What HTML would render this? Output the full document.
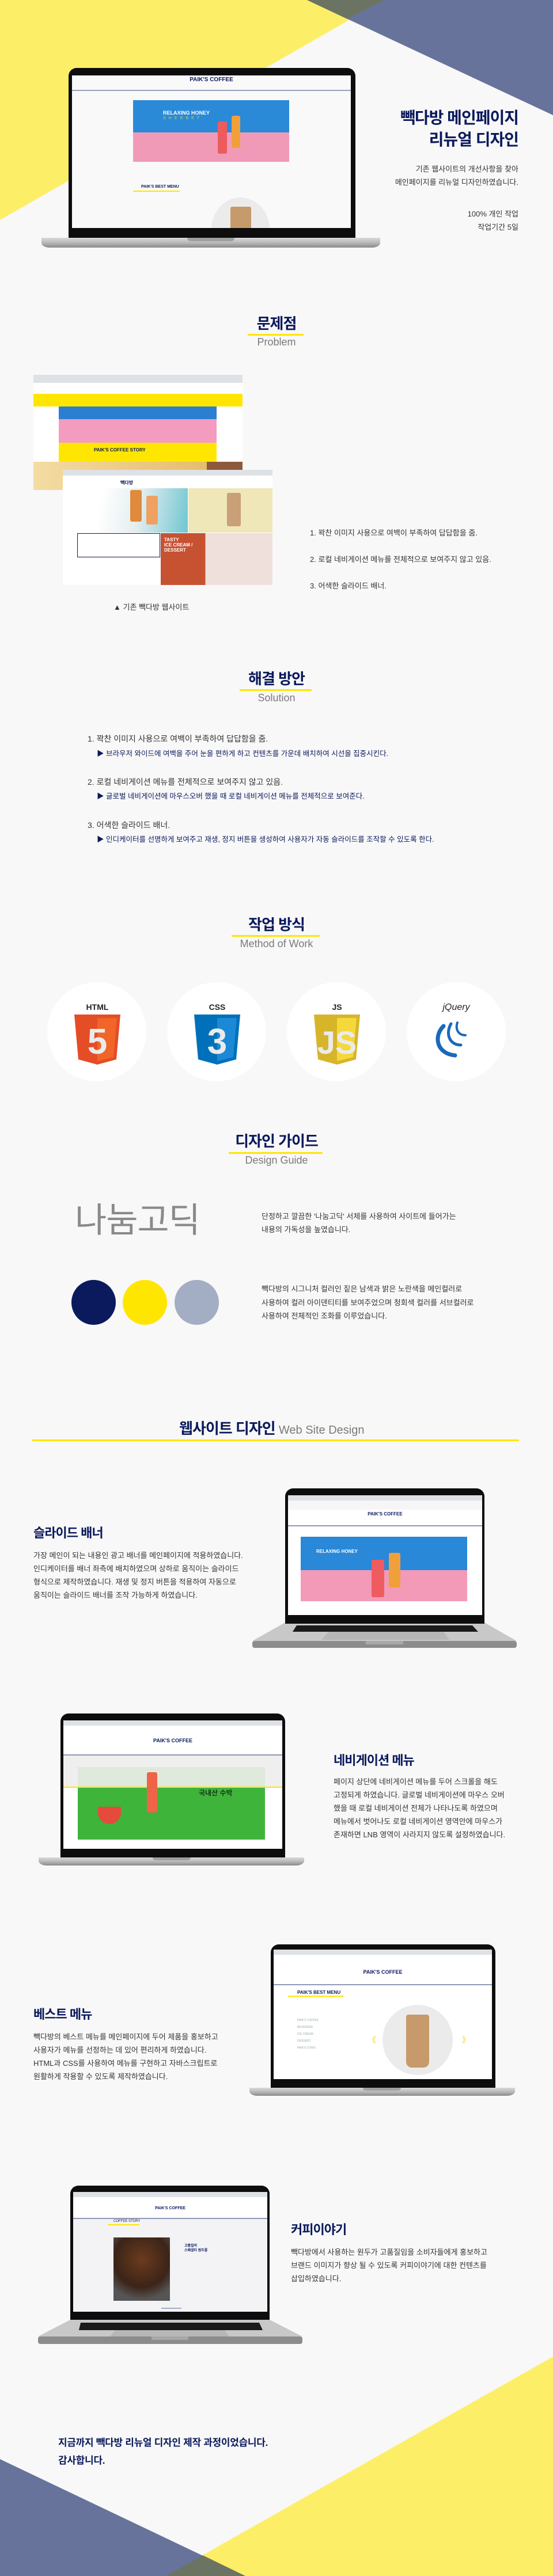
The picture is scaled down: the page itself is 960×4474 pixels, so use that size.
<!DOCTYPE html>
<html><head><meta charset="utf-8">
<style>
*{margin:0;padding:0;box-sizing:border-box}
body{width:960px;height:4474px;background:#f8f8f8;font-family:"Liberation Sans","Noto Sans CJK KR",sans-serif;overflow:hidden}
#w{position:relative;width:960px;height:4474px;overflow:hidden}
.a{position:absolute}
.t{position:absolute;white-space:nowrap;color:#333}
.nv{color:#0b1a5c;font-weight:bold}
.h{position:absolute;left:0;width:960px;text-align:center;color:#0b1a5c;font-weight:bold;font-size:26px;letter-spacing:-1px;line-height:30px}
.sub{position:absolute;left:0;width:960px;text-align:center;color:#7a7a7a;font-size:18px;line-height:22px}
.yl{position:absolute;background:#ffe600;height:3px}
.bz{position:absolute;background:#0d0d0d;border-radius:14px 14px 0 0}
.sc{position:absolute;background:#fff;overflow:hidden}
.base{position:absolute;background:linear-gradient(#d9d9d9,#b9b9b9 50%,#8a8a8a);border-radius:0 0 14px 14px/0 0 8px 8px}
.notch{position:absolute;background:#a0a0a0;border-radius:0 0 6px 6px}
.chr{position:absolute;left:0;right:0;top:0;background:#dee1e6}
.logo{position:absolute;text-align:center;color:#0b1a5c;font-weight:bold;white-space:nowrap}
.p13{font-size:13px;line-height:23px}
</style></head><body><div id="w">

<svg class="a" style="left:0;top:0" width="960" height="4474">
<polygon points="0,0 667,0 0,382" fill="#fdee68"/>
<polygon points="533,0 960,0 960,200" fill="#67739b"/>
<polygon points="533,0 667,0 603,33" fill="#6b7462"/>
<polygon points="960,4093 960,4474 288,4474" fill="#fdee68"/>
<polygon points="0,4271 426,4474 0,4474" fill="#67739b"/>
<polygon points="288,4474 426,4474 352,4438" fill="#6b7462"/>
</svg>

<!-- HERO LAPTOP -->
<div class="bz" style="left:119px;top:118px;width:498px;height:295px"></div>
<div class="sc" style="left:125px;top:131px;width:484px;height:265px;background:#f9f9fa">
  <div class="logo" style="left:0;width:484px;top:2px;font-size:10px">PAIK'S COFFEE</div>
  <div class="a" style="left:0;width:484px;top:25px;height:2px;background:#9aa2bd"></div>
  <div class="a" style="left:106px;top:43px;width:271px;height:107px;background:#2a8ad8"></div>
  <div class="a" style="left:106px;top:99px;width:271px;height:51px;background:#f19ab8"></div>
  <div class="t" style="left:158px;top:60px;color:#fff;font-weight:bold;font-size:9px">RELAXING HONEY</div>
  <div class="t" style="left:158px;top:71px;color:#b9d66a;font-size:7px;letter-spacing:5px">SHERBET</div>
  <div class="a" style="left:253px;top:80px;width:16px;height:56px;background:#ee5b5d;border-radius:3px"></div>
  <div class="a" style="left:277px;top:70px;width:15px;height:56px;background:#f0a03a;border-radius:3px"></div>
  <div class="t nv" style="left:120px;top:190px;font-size:7px">PAIK'S BEST MENU</div>
  <div class="a" style="left:106px;top:200px;width:81px;height:2px;background:#ffe600"></div>
  <div class="a" style="left:242px;top:212px;width:101px;height:110px;background:#ebebeb;border-radius:50%"></div>
  <div class="a" style="left:275px;top:228px;width:36px;height:40px;background:#c79a6b;border-radius:3px"></div>
</div>
<div class="base" style="left:72px;top:413px;width:588px;height:17px"></div>
<div class="notch" style="left:325px;top:413px;width:82px;height:6px"></div>

<div class="t nv" style="right:60px;top:186px;font-size:28px;letter-spacing:-1px;line-height:38px;text-align:right">빽다방 메인페이지<br>리뉴얼 디자인</div>
<div class="t" style="right:60px;top:282px;font-size:13px;line-height:23px;text-align:right">기존 웹사이트의 개선사항을 찾아<br>메인페이지를 리뉴얼 디자인하였습니다.</div>
<div class="t" style="right:60px;top:360px;font-size:13px;line-height:23px;text-align:right">100% 개인 작업<br>작업기간 5일</div>

<!-- PROBLEM -->
<div class="h" style="top:547px">문제점</div>
<div class="yl" style="left:430px;top:580px;width:97px"></div>
<div class="sub" style="top:583px">Problem</div>

<div class="a" style="left:58px;top:651px;width:363px;height:200px;background:#fff;overflow:hidden">
  <div class="chr" style="height:14px"></div>
  <div class="a" style="left:0;top:33px;width:363px;height:22px;background:#ffe600"></div>
  <div class="a" style="left:44px;top:55px;width:274px;height:22px;background:#2a7fd0"></div>
  <div class="a" style="left:44px;top:77px;width:274px;height:41px;background:#f39cc0"></div>
  <div class="a" style="left:44px;top:118px;width:274px;height:33px;background:#ffe600"></div>
  <div class="t nv" style="left:105px;top:126px;font-size:8px">PAIK'S COFFEE STORY</div>
  <div class="a" style="left:0;top:151px;width:301px;height:49px;background:linear-gradient(90deg,#f4dca3,#e6bd6c)"></div>
  <div class="a" style="left:301px;top:151px;width:62px;height:49px;background:#8b5a3c"></div>
</div>
<div class="a" style="left:109px;top:816px;width:364px;height:200px;background:#fff;overflow:hidden">
  <div class="chr" style="height:10px"></div>
  <div class="t nv" style="left:100px;top:17px;font-size:8px">빽다방</div>
  <div class="a" style="left:0;top:32px;width:217px;height:77px;background:linear-gradient(100deg,#fff 30%,#e4eef0 60%,#70c6d1)"></div>
  <div class="a" style="left:117px;top:35px;width:20px;height:55px;background:#e08a3b;border-radius:3px"></div>
  <div class="a" style="left:145px;top:45px;width:20px;height:50px;background:#f0a060;border-radius:3px"></div>
  <div class="a" style="left:218px;top:32px;width:146px;height:77px;background:#efe7b8"></div>
  <div class="a" style="left:285px;top:40px;width:24px;height:58px;background:#c9a078;border-radius:3px"></div>
  <div class="a" style="left:25px;top:110px;width:144px;height:42px;border:1px solid #0b1a5c"></div>
  <div class="a" style="left:170px;top:110px;width:194px;height:90px;background:linear-gradient(90deg,#c65232 40%,#efe0dc 40%)"></div>
  <div class="t" style="left:176px;top:117px;color:#fff;font-weight:bold;font-size:8px;line-height:9px">TASTY<br>ICE CREAM /<br>DESSERT</div>
</div>
<div class="t" style="left:197px;top:1044px;font-size:13px">▲ 기존 빽다방 웹사이트</div>
<div class="t" style="left:538px;top:903px;font-size:13px;line-height:46px">1. 꽉찬 이미지 사용으로 여백이 부족하여 답답함을 줌.<br>2. 로컬 네비게이션 메뉴를 전체적으로 보여주지 않고 있음.<br>3. 어색한 슬라이드 배너.</div>

<!-- SOLUTION -->
<div class="h" style="top:1164px">해결 방안</div>
<div class="yl" style="left:416px;top:1197px;width:125px"></div>
<div class="sub" style="top:1201px">Solution</div>
<div class="t" style="left:152px;top:1274px;font-size:14px;line-height:18px">1. 꽉찬 이미지 사용으로 여백이 부족하여 답답함을 줌.</div>
<div class="t nv" style="left:168px;top:1301px;font-size:12.5px;font-weight:normal;line-height:16px">▶ 브라우저 와이드에 여백을 주어 눈을 편하게 하고 컨텐츠를 가운데 배치하여 시선을 집중시킨다.</div>
<div class="t" style="left:152px;top:1349px;font-size:14px;line-height:18px">2. 로컬 네비게이션 메뉴를 전체적으로 보여주지 않고 있음.</div>
<div class="t nv" style="left:168px;top:1375px;font-size:12.5px;font-weight:normal;line-height:16px">▶ 글로벌 네비게이션에 마우스오버 했을 때 로컬 네비게이션 메뉴를 전체적으로 보여준다.</div>
<div class="t" style="left:152px;top:1424px;font-size:14px;line-height:18px">3. 어색한 슬라이드 배너.</div>
<div class="t nv" style="left:168px;top:1450px;font-size:12.5px;font-weight:normal;line-height:16px">▶ 인디케이터를 선명하게 보여주고 재생, 정지 버튼을 생성하여 사용자가 자동 슬라이드를 조작할 수 있도록 한다.</div>

<!-- METHOD -->
<div class="h" style="top:1591px">작업 방식</div>
<div class="yl" style="left:402px;top:1624px;width:153px"></div>
<div class="sub" style="top:1628px">Method of Work</div>

<svg class="a" style="left:0;top:1700px" width="960" height="190">
<g fill="#fff"><ellipse cx="168" cy="92" rx="86" ry="86"/><ellipse cx="376" cy="92" rx="86" ry="86"/><ellipse cx="584" cy="92" rx="86" ry="86"/><ellipse cx="792" cy="92" rx="86" ry="86"/></g>
<g font-family="Liberation Sans,sans-serif" font-weight="bold" font-size="14" fill="#222" text-anchor="middle">
<text x="169" y="54">HTML</text><text x="377" y="54">CSS</text><text x="585" y="54">JS</text>
<text x="792" y="54" font-style="italic" font-weight="normal" font-size="16">jQuery</text></g>
<g transform="translate(129,62)"><polygon points="0,0 80,0 73,78 40,87 7,78" fill="#e44d26"/><polygon points="40,6 74,6 68,74 40,81" fill="#f16529"/><text x="40" y="68" text-anchor="middle" font-family="Liberation Sans,sans-serif" font-weight="bold" font-size="62" fill="#ebebeb">5</text></g>
<g transform="translate(337,62)"><polygon points="0,0 80,0 73,78 40,87 7,78" fill="#0170ba"/><polygon points="40,6 74,6 68,74 40,81" fill="#1b89d5"/><text x="40" y="68" text-anchor="middle" font-family="Liberation Sans,sans-serif" font-weight="bold" font-size="62" fill="#ebebeb">3</text></g>
<g transform="translate(545,62)"><polygon points="0,0 80,0 73,78 40,87 7,78" fill="#d6b52a"/><polygon points="40,6 74,6 68,74 40,81" fill="#f5d83a"/><text x="40" y="68" text-anchor="middle" font-family="Liberation Sans,sans-serif" font-weight="bold" font-size="56" fill="#ebebeb">JS</text></g>
<g fill="none" stroke="#1969bc" stroke-linecap="round"><path d="M770,82 C752,100 758,130 790,133" stroke-width="7"/><path d="M783,78 C773,95 780,115 800,115" stroke-width="5"/><path d="M794,76 C790,88 796,98 808,98" stroke-width="4"/></g>
</svg>

<!-- DESIGN GUIDE -->
<div class="h" style="top:1967px">디자인 가이드</div>
<div class="yl" style="left:397px;top:2001px;width:163px"></div>
<div class="sub" style="top:2004px">Design Guide</div>
<div class="t" style="left:130px;top:2084px;font-size:60px;line-height:72px;color:#8a8a8a;letter-spacing:-1px">나눔고딕</div>
<div class="t" style="left:454px;top:2101px;font-size:13px;line-height:23px">단정하고 깔끔한 '나눔고딕' 서체를 사용하여 사이트에 들어가는<br>내용의 가독성을 높였습니다.</div>
<div class="a" style="left:124px;top:2223px;width:77px;height:78px;border-radius:50%;background:#0b1a5c"></div>
<div class="a" style="left:213px;top:2223px;width:77px;height:78px;border-radius:50%;background:#ffe600"></div>
<div class="a" style="left:303px;top:2223px;width:77px;height:78px;border-radius:50%;background:#a3adc4"></div>
<div class="t" style="left:454px;top:2227px;font-size:13px;line-height:23.5px">빽다방의 시그니처 컬러인 짙은 남색과 밝은 노란색을 메인컬러로<br>사용하여 컬러 아이덴티티를 보여주었으며 청회색 컬러를 서브컬러로<br>사용하여 전체적인 조화를 이루었습니다.</div>

<!-- WEB SITE DESIGN -->
<div class="t nv" style="left:311px;top:2465px;font-size:26px;letter-spacing:-1px;line-height:32px">웹사이트 디자인 <span style="font-weight:normal;color:#7a7a7a;font-size:20px;letter-spacing:0">Web Site Design</span></div>
<div class="yl" style="left:56px;top:2500px;width:845px"></div>

<!-- slide banner laptop (open) -->
<svg class="a" style="left:430px;top:2810px" width="480" height="60">
<polygon points="65,8 411,8 467,40 8,40" fill="#c8c8c8"/>
<polygon points="85,13 390,13 400,24 78,24" fill="#1a1a1a"/>
<polygon points="140,24 340,24 350,38 128,38" fill="#b7b7b7"/>
<rect x="8" y="40" width="459" height="12" rx="4" fill="#8c8c8c"/>
<rect x="205" y="40" width="65" height="6" fill="#a8a8a8"/>
</svg>
<div class="bz" style="left:495px;top:2585px;width:346px;height:235px"></div>
<div class="sc" style="left:500px;top:2597px;width:337px;height:208px">
  <div class="chr" style="height:9px"></div>
  <div class="a" style="left:0;top:9px;width:337px;height:16px;background:#f6f6f6"></div>
  <div class="logo" style="left:0;width:337px;top:28px;font-size:8px">PAIK'S COFFEE</div>
  <div class="a" style="left:0;top:52px;width:337px;height:2px;background:#8f98b5"></div>
  <div class="a" style="left:22px;top:72px;width:289px;height:58px;background:#2a88d8"></div>
  <div class="a" style="left:22px;top:130px;width:289px;height:54px;background:#f29ab8"></div>
  <div class="t" style="left:49px;top:93px;color:#fff;font-weight:bold;font-size:8px">RELAXING HONEY</div>
  <div class="a" style="left:145px;top:112px;width:22px;height:65px;background:#ef5c5f;border-radius:3px"></div>
  <div class="a" style="left:175px;top:100px;width:20px;height:60px;background:#f0a03a;border-radius:3px"></div>
</div>
<div class="t nv" style="left:58px;top:2650px;font-size:22px;letter-spacing:-1px;line-height:26px">슬라이드 배너</div>
<div class="t p13" style="left:58px;top:2690px">가장 메인이 되는 내용인 광고 배너를 메인페이지에 적용하였습니다.<br>인디케이터를 배너 좌측에 배치하였으며 상하로 움직이는 슬라이드<br>형식으로 제작하였습니다. 재생 및 정지 버튼을 적용하여 자동으로<br>움직이는 슬라이드 배너를 조작 가능하게 하였습니다.</div>

<!-- nav laptop -->
<div class="bz" style="left:105px;top:2976px;width:390px;height:250px"></div>
<div class="sc" style="left:110px;top:2988px;width:380px;height:223px">
  <div class="chr" style="height:9px"></div>
  <div class="logo" style="left:0;width:380px;top:30px;font-size:9px">PAIK'S COFFEE</div>
  <div class="a" style="left:0;top:59px;width:380px;height:2px;background:#8f98b5"></div>
  <div class="a" style="left:0;top:61px;width:380px;height:54px;background:#efefef"></div>
  <div class="a" style="left:25px;top:81px;width:325px;height:126px;background:#3fb43a"></div>
  <div class="a" style="left:25px;top:81px;width:325px;height:34px;background:#dfe9dc"></div>
  <div class="a" style="left:0;top:115px;width:380px;height:2px;background:#ffe600"></div>
  <div class="a" style="left:60px;top:150px;width:40px;height:30px;background:#e64a3c;border-radius:0 0 40px 40px"></div>
  <div class="a" style="left:145px;top:90px;width:18px;height:70px;background:#ef6447;border-radius:3px"></div>
  <div class="t" style="left:235px;top:117px;color:#17381a;font-weight:bold;font-size:12px">국내산 수박</div>
</div>
<div class="base" style="left:67px;top:3226px;width:461px;height:14px"></div>
<div class="notch" style="left:265px;top:3226px;width:66px;height:5px"></div>
<div class="t nv" style="left:579px;top:3045px;font-size:22px;letter-spacing:-1px;line-height:26px">네비게이션 메뉴</div>
<div class="t p13" style="left:579px;top:3083px">페이지 상단에 네비게이션 메뉴를 두어 스크롤을 해도<br>고정되게 하였습니다. 글로벌 네비게이션에 마우스 오버<br>했을 때 로컬 네비게이션 전체가 나타나도록 하였으며<br>메뉴에서 벗어나도 로컬 네비게이션 영역안에 마우스가<br>존재하면 LNB 영역이 사라지지 않도록 설정하였습니다.</div>

<!-- best menu laptop -->
<div class="bz" style="left:470px;top:3377px;width:390px;height:250px"></div>
<div class="sc" style="left:475px;top:3386px;width:379px;height:225px">
  <div class="chr" style="height:9px"></div>
  <div class="logo" style="left:0;width:379px;top:34px;font-size:9px">PAIK'S COFFEE</div>
  <div class="a" style="left:0;top:60px;width:379px;height:2px;background:#8f98b5"></div>
  <div class="t nv" style="left:41px;top:70px;font-size:8px">PAIK'S BEST MENU</div>
  <div class="a" style="left:25px;top:80px;width:96px;height:2px;background:#ffe600"></div>
  <div class="t" style="left:41px;top:117px;font-size:5px;line-height:12px;color:#9aa">PAIK'S COFFEE<br>BEVERAGE<br>ICE CREAM<br>DESSERT<br>PAIK'S CONO</div>
  <div class="a" style="left:189px;top:96px;width:122px;height:122px;background:#ebebeb;border-radius:50%"></div>
  <div class="a" style="left:230px;top:113px;width:40px;height:92px;background:#c79a6b;border-radius:4px 4px 10px 10px"></div>
  <div class="t" style="left:164px;top:147px;color:#f3d21a;font-size:14px">《</div>
  <div class="t" style="left:327px;top:147px;color:#f3d21a;font-size:14px">》</div>
</div>
<div class="base" style="left:433px;top:3626px;width:461px;height:14px"></div>
<div class="notch" style="left:630px;top:3626px;width:66px;height:5px"></div>
<div class="t nv" style="left:58px;top:3486px;font-size:22px;letter-spacing:-1px;line-height:26px">베스트 메뉴</div>
<div class="t p13" style="left:58px;top:3526px">빽다방의 베스트 메뉴를 메인페이지에 두어 제품을 홍보하고<br>사용자가 메뉴를 선정하는 데 있어 편리하게 하였습니다.<br>HTML과 CSS를 사용하여 메뉴를 구현하고 자바스크립트로<br>원활하게 작용할 수 있도록 제작하였습니다.</div>

<!-- coffee laptop (open) -->
<svg class="a" style="left:60px;top:4022px" width="480" height="56">
<polygon points="62,7 408,7 465,36 6,36" fill="#c8c8c8"/>
<polygon points="80,12 390,12 396,25 77,25" fill="#1a1a1a"/>
<polygon points="140,25 330,25 338,36 131,36" fill="#b7b7b7"/>
<rect x="6" y="36" width="459" height="13" rx="4" fill="#8c8c8c"/>
<rect x="203" y="36" width="64" height="6" fill="#a8a8a8"/>
</svg>
<div class="bz" style="left:122px;top:3796px;width:346px;height:233px"></div>
<div class="sc" style="left:127px;top:3807px;width:337px;height:208px;background:#f3f3f5">
  <div class="chr" style="height:9px"></div>
  <div class="a" style="left:0;top:9px;width:337px;height:14px;background:#fff"></div>
  <div class="a" style="left:0;top:23px;width:337px;height:22px;background:#fff"></div>
  <div class="logo" style="left:0;width:337px;top:25px;font-size:7px">PAIK'S COFFEE</div>
  <div class="a" style="left:0;top:45px;width:337px;height:2px;background:#8f98b5"></div>
  <div class="t nv" style="left:70px;top:48px;font-size:6px;font-weight:normal">COFFEE STORY</div>
  <div class="a" style="left:60px;top:56px;width:55px;height:2px;background:#ffe600"></div>
  <div class="a" style="left:70px;top:79px;width:98px;height:110px;background:radial-gradient(circle at 50% 35%,#6b3b1e,#3b2418 55%,#555 80%)"></div>
  <div class="t nv" style="left:193px;top:90px;font-size:6px;line-height:8px">고품질의<br>스페셜티 원두를</div>
  <div class="a" style="left:153px;top:201px;width:35px;height:2px;background:#a3adc4"></div>
</div>
<div class="t nv" style="left:505px;top:3860px;font-size:22px;letter-spacing:-1px;line-height:26px">커피이야기</div>
<div class="t p13" style="left:505px;top:3900px">빽다방에서 사용하는 원두가 고품질임을 소비자들에게 홍보하고<br>브랜드 이미지가 향상 될 수 있도록 커피이야기에 대한 컨텐츠를<br>삽입하였습니다.</div>

<div class="t nv" style="left:101px;top:4227px;font-size:17px;line-height:31px;letter-spacing:-0.3px">지금까지 빽다방 리뉴얼 디자인 제작 과정이었습니다.<br>감사합니다.</div>

</div></body></html>
